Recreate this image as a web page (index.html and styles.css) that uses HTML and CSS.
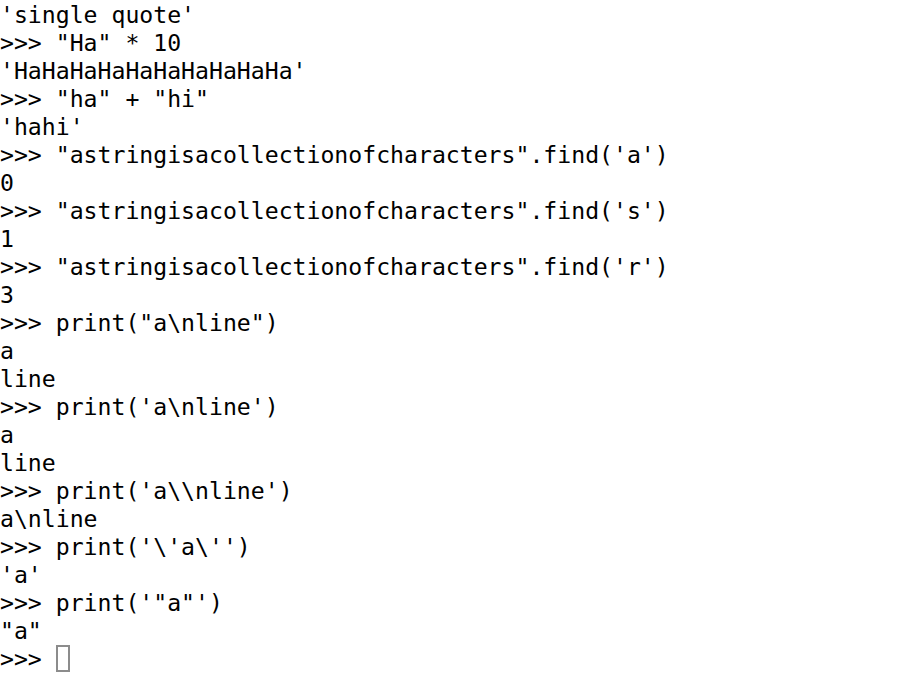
FILE: index.html
```html
<!DOCTYPE html>
<html>
<head>
<meta charset="utf-8">
<link rel="stylesheet" href="styles.css">
</head>
<body>
<pre class="term">'single quote'
&gt;&gt;&gt; "Ha" * 10
'HaHaHaHaHaHaHaHaHaHa'
&gt;&gt;&gt; "ha" + "hi"
'hahi'
&gt;&gt;&gt; "astringisacollectionofcharacters".find('a')
0
&gt;&gt;&gt; "astringisacollectionofcharacters".find('s')
1
&gt;&gt;&gt; "astringisacollectionofcharacters".find('r')
3
&gt;&gt;&gt; print("a\nline")
a
line
&gt;&gt;&gt; print('a\nline')
a
line
&gt;&gt;&gt; print('a\\nline')
a\nline
&gt;&gt;&gt; print('\'a\'')
'a'
&gt;&gt;&gt; print('"a"')
"a"
&gt;&gt;&gt; <span class="cursor"></span></pre>
</body>
</html>
```
FILE: styles.css
```css
html, body {
  margin: 0;
  padding: 0;
  background: #ffffff;
}
.term {
  margin: 0;
  padding: 1px 0 0 0;
  font-family: "DejaVu Sans Mono", "Liberation Mono", monospace;
  font-size: 23.15px;
  line-height: 28px;
  color: #000000;
  white-space: pre;
}
.cursor {
  display: inline-block;
  box-sizing: border-box;
  width: 14px;
  height: 27px;
  border: 2px solid #8c8c8c;
  vertical-align: top;
  margin-top: 0px;
}
```
